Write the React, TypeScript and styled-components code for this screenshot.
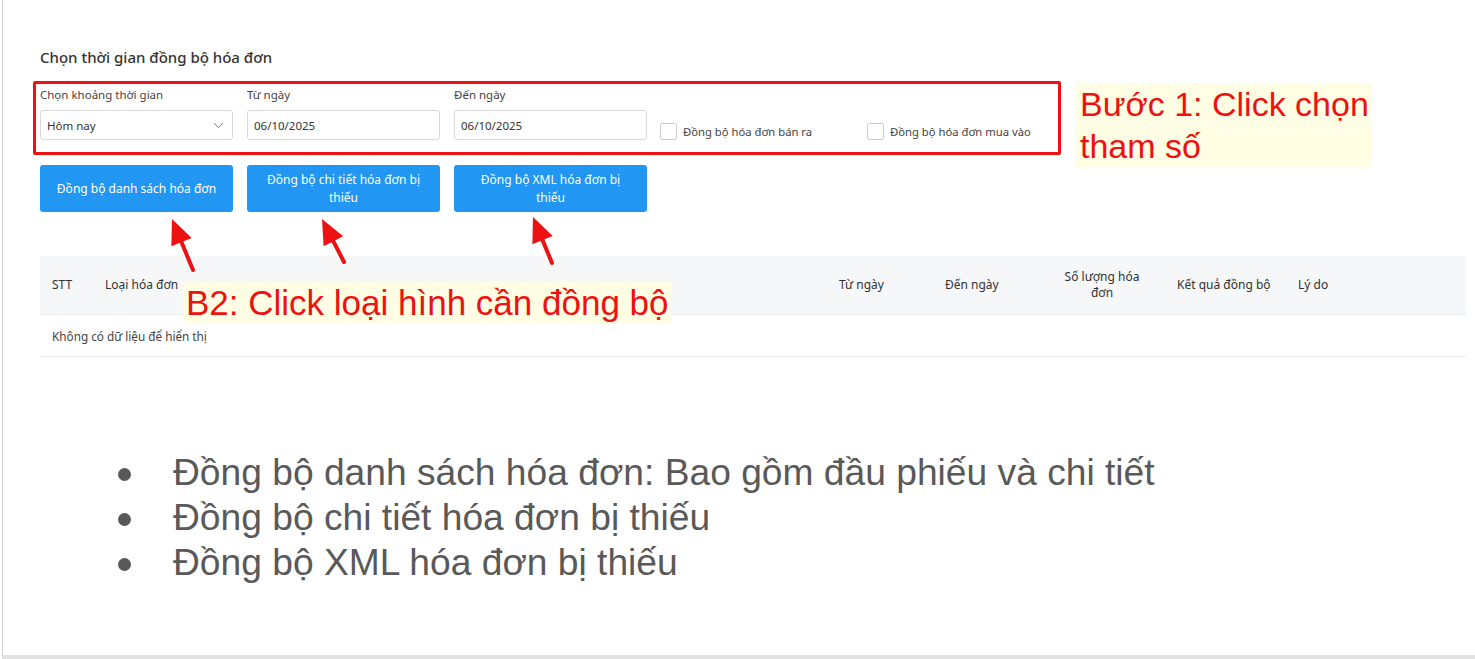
import React, { FC } from 'react';
import styled, { createGlobalStyle } from 'styled-components';
import { ChevronDown } from 'lucide-react';

const GlobalStyle = createGlobalStyle`
  html, body {
    margin: 0;
    padding: 0;
    background: #ffffff;
  }

  body {
    font-family: 'Noto Sans', 'Liberation Sans', sans-serif;
    color: #333333;
  }
`;

const Slide = styled.div`
  box-sizing: border-box;
  height: 659px;
  margin-left: 2px;
  border-left: 1px solid #cfcfcf;
  border-bottom: 4px solid #e2e2e2;
  overflow: hidden;
`;

const Content = styled.div`
  padding: 47px 0 0 37px;
  width: 1426px;
`;

const Title = styled.h3`
  margin: 0;
  font-size: 15px;
  line-height: 20px;
  font-weight: 500;
  color: #333333;
`;

const FilterRow = styled.div`
  position: relative;
  margin: 14px 0 0 -7px;
  width: 1028px;
`;

const HighlightBox = styled.div`
  box-sizing: border-box;
  border: 3px solid #ee1111;
  border-radius: 2px;
  padding: 3px 0 12px 4px;
  height: 74px;
  display: grid;
  grid-template-columns: repeat(5, 193px);
  column-gap: 14px;
  align-items: end;
`;

const Field = styled.label`
  display: flex;
  flex-direction: column;
  gap: 7px;
`;

const FieldLabel = styled.span`
  font-size: 11.5px;
  line-height: 16px;
  color: #444444;
`;

const Control = styled.div`
  box-sizing: border-box;
  height: 30px;
  border: 1px solid #d9d9d9;
  border-radius: 3px;
  background: #ffffff;
  padding: 0 5px 0 6px;
  display: flex;
  align-items: center;
  justify-content: space-between;
  font-size: 11.5px;
  color: #333333;

  svg {
    color: #666666;
  }
`;

const CheckOption = styled.label`
  display: flex;
  align-items: center;
  gap: 6px;
  margin-left: -1px;
  font-size: 11.25px;
  color: #444444;
  white-space: nowrap;
`;

const CheckBox = styled.span`
  box-sizing: border-box;
  width: 17px;
  height: 17px;
  border: 1px solid #cccccc;
  border-radius: 2px;
  background: #ffffff;
`;

const Callout = styled.div<{ $size: number }>`
  position: absolute;
  padding: 0 5px;
  background: #fffde3;
  color: #ee1111;
  font-family: 'Liberation Sans', Arial, sans-serif;
  font-size: ${({ $size }) => $size}px;
  line-height: 42px;
  white-space: nowrap;
`;

const StepOne = styled(Callout)`
  left: 1042px;
  top: 2px;
  width: 287px;
`;

const StepTwo = styled(Callout)`
  left: 143px;
  top: 26px;
  padding: 0 3px;
`;

const ButtonRow = styled.div`
  display: flex;
  gap: 14px;
  margin-top: 10px;
`;

const ButtonSlot = styled.div`
  position: relative;
`;

const SyncButton = styled.button`
  box-sizing: border-box;
  width: 193px;
  height: 47px;
  padding: 0 16px;
  border: none;
  border-radius: 3px;
  background: #2196f3;
  color: #ffffff;
  font-family: inherit;
  font-size: 12px;
  line-height: 18px;
  text-align: center;
  cursor: pointer;
`;

const ArrowSvg = styled.svg<{ $x: number; $y: number }>`
  position: absolute;
  z-index: 2;
  left: ${({ $x }) => $x}px;
  top: ${({ $y }) => $y}px;
  overflow: visible;
  pointer-events: none;
`;

type ArrowProps = { x: number; y: number; dx: number; dy: number };

/** Red pointer arrow; (x, y) is the tip, (dx, dy) leads to the tail. */
const Arrow: FC<ArrowProps> = ({ x, y, dx, dy }) => {
  const len = Math.hypot(dx, dy);
  const ux = dx / len;
  const uy = dy / len;
  const head = 25;
  const half = 11;
  const bx = ux * head;
  const by = uy * head;
  const pts = `0,0 ${bx - uy * half},${by + ux * half} ${bx + uy * half},${by - ux * half}`;
  return (
    <ArrowSvg $x={x} $y={y} width={1} height={1}>
      <polygon points={pts} fill="#ee1111" />
      <line
        x1={ux * 18}
        y1={uy * 18}
        x2={dx}
        y2={dy}
        stroke="#ee1111"
        strokeWidth={4}
        strokeLinecap="round"
      />
    </ArrowSvg>
  );
};

const TableWrap = styled.div`
  position: relative;
  margin-top: 44px;
`;

const Table = styled.table`
  width: 1426px;
  border-collapse: collapse;
  table-layout: fixed;
  font-size: 11.75px;
`;

const HeadCell = styled.th<{ $center?: boolean }>`
  height: 58px;
  padding: 0 ${({ $center }) => ($center ? '18px' : '12px')};
  background: #f6f7f9;
  border-bottom: 1px solid #eeeeee;
  font-weight: 400;
  font-size: 12px;
  color: #333333;
  line-height: 16px;
  text-align: ${({ $center }) => ($center ? 'center' : 'left')};
`;

const EmptyCell = styled.td`
  height: 41px;
  padding: 0 12px;
  border-bottom: 1px solid #e9e9e9;
  color: #444444;
`;

const Notes = styled.ul`
  list-style: none;
  margin: 93px 0 0 78px;
  padding: 0;
  font-family: 'Liberation Sans', Arial, sans-serif;
  font-size: 37.2px;
  line-height: 45px;
  color: #595959;
`;

const Note = styled.li`
  position: relative;
  padding-left: 55px;

  &::before {
    content: '';
    position: absolute;
    left: 0;
    top: 18px;
    width: 13px;
    height: 13px;
    border-radius: 50%;
    background: #595959;
  }
`;

const columns = [53, 734, 106, 106, 126, 121, 180];

const App: FC = () => (
  <>
    <GlobalStyle />
    <Slide>
      <Content>
        <Title>Chọn thời gian đồng bộ hóa đơn</Title>

        <FilterRow>
          <HighlightBox>
            <Field>
              <FieldLabel>Chọn khoảng thời gian</FieldLabel>
              <Control>
                Hôm nay
                <ChevronDown size={17} strokeWidth={1.3} />
              </Control>
            </Field>
            <Field>
              <FieldLabel>Từ ngày</FieldLabel>
              <Control>06/10/2025</Control>
            </Field>
            <Field>
              <FieldLabel>Đến ngày</FieldLabel>
              <Control>06/10/2025</Control>
            </Field>
            <CheckOption>
              <CheckBox />
              Đồng bộ hóa đơn bán ra
            </CheckOption>
            <CheckOption>
              <CheckBox />
              Đồng bộ hóa đơn mua vào
            </CheckOption>
          </HighlightBox>
          <StepOne $size={34}>
            Bước 1: Click chọn
            <br />
            tham số
          </StepOne>
        </FilterRow>

        <ButtonRow>
          <ButtonSlot>
            <SyncButton>Đồng bộ danh sách hóa đơn</SyncButton>
            <Arrow x={132} y={54} dx={21} dy={51} />
          </ButtonSlot>
          <ButtonSlot>
            <SyncButton>Đồng bộ chi tiết hóa đơn bị thiếu</SyncButton>
            <Arrow x={75} y={54} dx={22} dy={43} />
          </ButtonSlot>
          <ButtonSlot>
            <SyncButton>Đồng bộ XML hóa đơn bị thiếu</SyncButton>
            <Arrow x={79} y={52} dx={19} dy={46} />
          </ButtonSlot>
        </ButtonRow>

        <TableWrap>
          <Table>
            <colgroup>
              {columns.map((w, i) => (
                <col key={i} style={{ width: w }} />
              ))}
            </colgroup>
            <thead>
              <tr>
                <HeadCell>STT</HeadCell>
                <HeadCell>Loại hóa đơn</HeadCell>
                <HeadCell>Từ ngày</HeadCell>
                <HeadCell>Đến ngày</HeadCell>
                <HeadCell $center>Số lượng hóa đơn</HeadCell>
                <HeadCell>Kết quả đồng bộ</HeadCell>
                <HeadCell>Lý do</HeadCell>
              </tr>
            </thead>
            <tbody>
              <tr>
                <EmptyCell colSpan={7}>Không có dữ liệu để hiển thị</EmptyCell>
              </tr>
            </tbody>
          </Table>
          <StepTwo $size={35}>B2: Click loại hình cần đồng bộ</StepTwo>
        </TableWrap>

        <Notes>
          <Note>Đồng bộ danh sách hóa đơn: Bao gồm đầu phiếu và chi tiết</Note>
          <Note>Đồng bộ chi tiết hóa đơn bị thiếu</Note>
          <Note>Đồng bộ XML hóa đơn bị thiếu</Note>
        </Notes>
      </Content>
    </Slide>
  </>
);

export default App;
